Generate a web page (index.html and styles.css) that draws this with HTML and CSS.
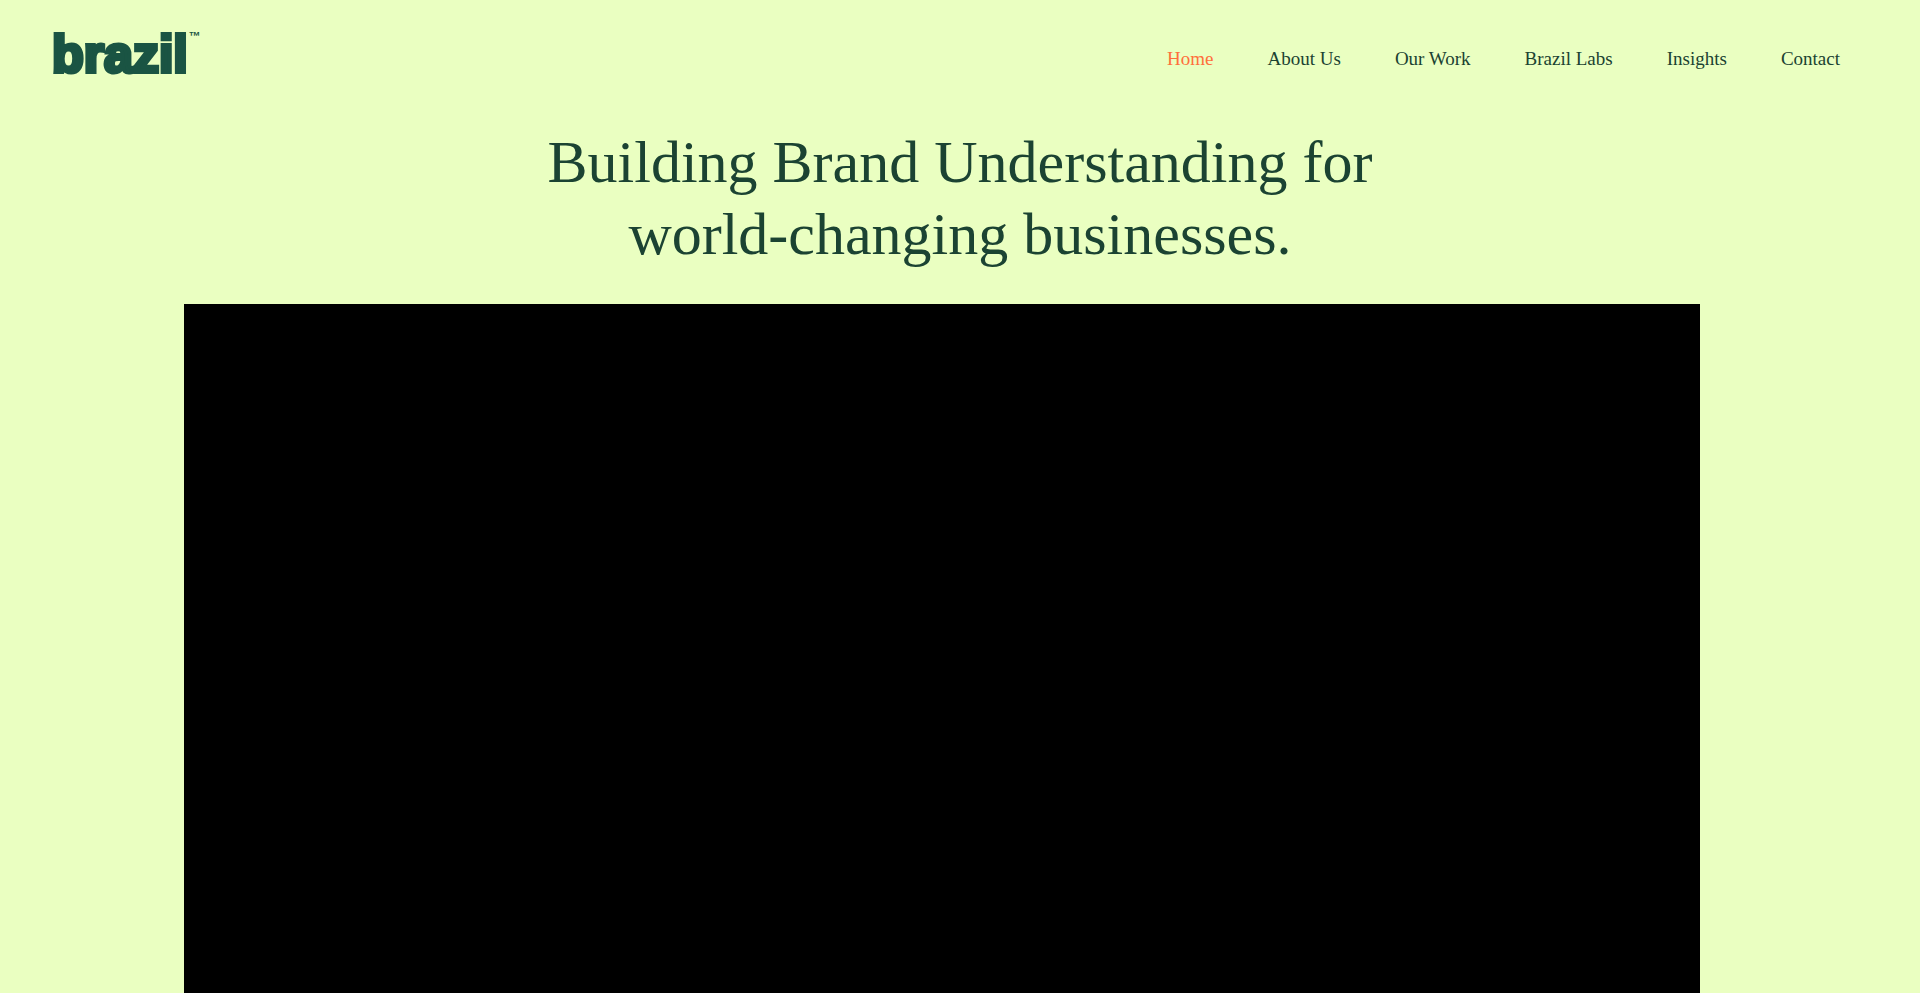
FILE: index.html
```html
<!DOCTYPE html>
<html lang="en">
<head>
<meta charset="utf-8">
<meta name="viewport" content="width=device-width, initial-scale=1">
<title>Brazil</title>
<link rel="stylesheet" href="styles.css">
</head>
<body>
<header class="site-header">
  <a class="logo" href="#"><span class="logo-word">brazil</span><span class="logo-mark">™</span></a>
  <nav class="site-nav" aria-label="Main">
    <a class="nav-link nav-link-current" href="#" aria-current="page">Home</a>
    <a class="nav-link" href="#">About Us</a>
    <a class="nav-link" href="#">Our Work</a>
    <a class="nav-link" href="#">Brazil Labs</a>
    <a class="nav-link" href="#">Insights</a>
    <a class="nav-link" href="#">Contact</a>
  </nav>
</header>
<main class="hero">
  <h1 class="hero-title">Building Brand Understanding for<br>world-changing businesses.</h1>
  <div class="hero-video"></div>
</main>
</body>
</html>
```

FILE: styles.css
```css
* {
  box-sizing: border-box;
}

body {
  margin: 0;
  min-height: 100vh;
  display: flex;
  flex-direction: column;
  background: #eaffc1;
  color: #1b4332;
  font-family: "Liberation Serif", "Times New Roman", serif;
}

.site-header {
  display: flex;
  flex-wrap: wrap;
  align-items: flex-start;
  justify-content: space-between;
  padding: 24px 80px 18px 52px;
}

.logo {
  display: flex;
  align-items: flex-start;
  color: #1a5443;
  font-family: "Liberation Sans", Arial, sans-serif;
  font-weight: bold;
  text-decoration: none;
}

.logo-word {
  font-size: 52px;
  line-height: 60px;
  -webkit-text-stroke: 4px #1a5443;
}

.logo-mark {
  padding: 6px 0 0 1px;
  font-size: 12px;
  line-height: 12px;
}

.site-nav {
  display: flex;
  flex-wrap: wrap;
  gap: 8px 54px;
  padding-top: 24px;
}

.nav-link {
  color: #1b4332;
  font-size: 19px;
  line-height: 22px;
  text-decoration: none;
}

.nav-link-current {
  color: #ff6f3c;
}

.hero {
  flex: 1;
  display: flex;
  flex-direction: column;
  padding-top: 24px;
}

.hero-title {
  margin: 0 0 34px;
  font-size: 60px;
  font-weight: normal;
  line-height: 72px;
  text-align: center;
}

.hero-video {
  flex: 1;
  min-height: 320px;
  margin: 0 220px 0 184px;
  background: #000;
}
```
